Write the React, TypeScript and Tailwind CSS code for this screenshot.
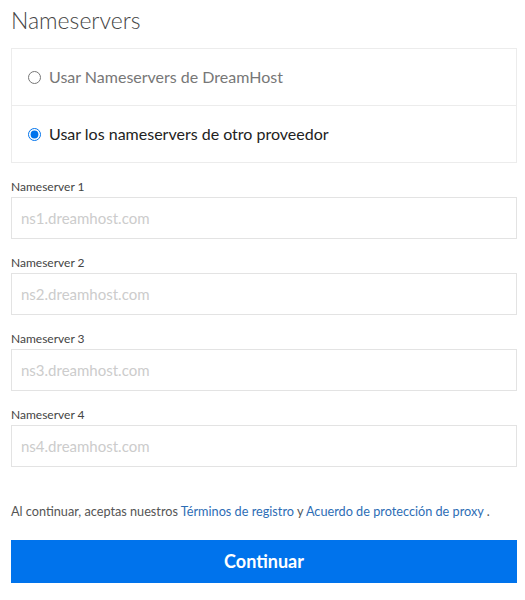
import { useState } from "react";

const servers = ["ns1.dreamhost.com", "ns2.dreamhost.com", "ns3.dreamhost.com", "ns4.dreamhost.com"];

export default function App() {
  const [choice, setChoice] = useState<"dh" | "other">("other");

  return (
    <div className="min-h-screen bg-white pl-[11px] pr-[8px] pt-[5px] font-['Lato',sans-serif] text-[#222]">
      <h1 className="text-[23px] font-light leading-[30px] text-[#444]">Nameservers</h1>

      {/* Radio choices */}
      <div className="mt-[13px] border border-[#ececec]">
        <label className="flex h-[57px] cursor-pointer items-center gap-[8px] border-b border-[#ececec] px-[16px]">
          <input
            type="radio"
            name="ns"
            checked={choice === "dh"}
            onChange={() => setChoice("dh")}
            className="m-0 h-[13px] w-[13px] accent-[#0073ec]"
          />
          <span className={`text-[16px] ${choice === "dh" ? "text-[#222]" : "text-[#777]"}`}>
            Usar Nameservers de DreamHost
          </span>
        </label>
        <label className="flex h-[56px] cursor-pointer items-center gap-[8px] px-[16px]">
          <input
            type="radio"
            name="ns"
            checked={choice === "other"}
            onChange={() => setChoice("other")}
            className="m-0 h-[13px] w-[13px] accent-[#0073ec]"
          />
          <span className={`text-[16px] ${choice === "other" ? "text-[#222]" : "text-[#777]"}`}>
            Usar los nameservers de otro proveedor
          </span>
        </label>
      </div>

      {/* Nameserver inputs */}
      <div className="mt-[17px] flex flex-col gap-[17px]">
        {servers.map((ns, i) => (
          <div key={ns} className="flex flex-col">
            <label className="text-[12px] leading-[14px] text-[#444]">Nameserver {i + 1}</label>
            <input
              type="text"
              placeholder={ns}
              className="mt-[3px] h-[42px] w-full border border-[#e3e3e3] px-[9px] text-[15px] text-[#222] outline-none placeholder:text-[#ccc]"
            />
          </div>
        ))}
      </div>

      <p className="mt-[35px] text-[12.7px] leading-[18px] text-[#555]">
        Al continuar, aceptas nuestros{" "}
        <a href="#" className="text-[#2d6db5]">Términos de registro</a> y{" "}
        <a href="#" className="text-[#2d6db5]">Acuerdo de protección de proxy</a> .
      </p>

      <button className="mt-[20px] h-[43px] w-full bg-[#0073ec] text-[18px] font-bold text-white">
        Continuar
      </button>
    </div>
  );
}
